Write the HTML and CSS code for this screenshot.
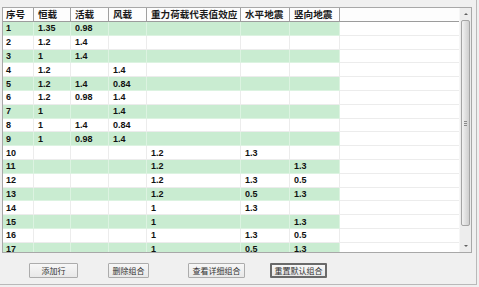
FILE: index.html
```html
<!DOCTYPE html>
<html lang="zh-CN">

<head>
    <meta charset="UTF-8">
    <title>荷载组合</title>
    <link rel="stylesheet" href="styles.css">
</head>

<body>
    <div class="window">
        <div class="grid">
            <div class="grid-body">
                <table class="combo-table">
                    <colgroup>
                        <col class="c-no">
                        <col class="c-dead">
                        <col class="c-live">
                        <col class="c-wind">
                        <col class="c-grav">
                        <col class="c-hor">
                        <col class="c-ver">
                        <col class="c-fill">
                    </colgroup>
                    <thead>
                        <tr>
                            <th>序号</th>
                            <th>恒载</th>
                            <th>活载</th>
                            <th>风载</th>
                            <th>重力荷载代表值效应</th>
                            <th>水平地震</th>
                            <th>竖向地震</th>
                            <th class="fill"></th>
                        </tr>
                    </thead>
                    <tbody>
                        <tr class="alt"><td>1</td><td>1.35</td><td>0.98</td><td></td><td></td><td></td><td></td><td class="fill"></td></tr>
                        <tr><td>2</td><td>1.2</td><td>1.4</td><td></td><td></td><td></td><td></td><td class="fill"></td></tr>
                        <tr class="alt"><td>3</td><td>1</td><td>1.4</td><td></td><td></td><td></td><td></td><td class="fill"></td></tr>
                        <tr><td>4</td><td>1.2</td><td></td><td>1.4</td><td></td><td></td><td></td><td class="fill"></td></tr>
                        <tr class="alt"><td>5</td><td>1.2</td><td>1.4</td><td>0.84</td><td></td><td></td><td></td><td class="fill"></td></tr>
                        <tr><td>6</td><td>1.2</td><td>0.98</td><td>1.4</td><td></td><td></td><td></td><td class="fill"></td></tr>
                        <tr class="alt"><td>7</td><td>1</td><td></td><td>1.4</td><td></td><td></td><td></td><td class="fill"></td></tr>
                        <tr><td>8</td><td>1</td><td>1.4</td><td>0.84</td><td></td><td></td><td></td><td class="fill"></td></tr>
                        <tr class="alt"><td>9</td><td>1</td><td>0.98</td><td>1.4</td><td></td><td></td><td></td><td class="fill"></td></tr>
                        <tr><td>10</td><td></td><td></td><td></td><td>1.2</td><td>1.3</td><td></td><td class="fill"></td></tr>
                        <tr class="alt"><td>11</td><td></td><td></td><td></td><td>1.2</td><td></td><td>1.3</td><td class="fill"></td></tr>
                        <tr><td>12</td><td></td><td></td><td></td><td>1.2</td><td>1.3</td><td>0.5</td><td class="fill"></td></tr>
                        <tr class="alt"><td>13</td><td></td><td></td><td></td><td>1.2</td><td>0.5</td><td>1.3</td><td class="fill"></td></tr>
                        <tr><td>14</td><td></td><td></td><td></td><td>1</td><td>1.3</td><td></td><td class="fill"></td></tr>
                        <tr class="alt"><td>15</td><td></td><td></td><td></td><td>1</td><td></td><td>1.3</td><td class="fill"></td></tr>
                        <tr><td>16</td><td></td><td></td><td></td><td>1</td><td>1.3</td><td>0.5</td><td class="fill"></td></tr>
                        <tr class="alt"><td>17</td><td></td><td></td><td></td><td>1</td><td>0.5</td><td>1.3</td><td class="fill"></td></tr>
                    </tbody>
                </table>
            </div>
            <div class="vscroll">
                <div class="arrow up"></div>
                <div class="thumb"><span class="grip"></span></div>
                <div class="arrow down"></div>
            </div>
        </div>
        <div class="actions">
            <button class="btn btn-add">添加行</button>
            <button class="btn btn-del">删除组合</button>
            <button class="btn btn-view">查看详细组合</button>
            <button class="btn btn-reset is-default">重置默认组合</button>
        </div>
    </div>
</body>

</html>
```

FILE: styles.css
```css
body {
    margin: 0;
    background-color: #f0f0f0;
    font-family: "Liberation Sans", Arial, sans-serif;
    color: #000;
}

.window {
    width: 476px;
    height: 284px;
    border-right: 1px solid #b9b9b9;
    border-bottom: 1px solid #b9b9b9;
    overflow: hidden;
}

.grid {
    display: flex;
    width: 468px;
    height: 244px;
    margin: 7px 0 0 2px;
    border: 1px solid #a8a8a8;
    background: #ffffff;
}

.grid-body {
    width: 457px;
    overflow: hidden;
}

.combo-table {
    table-layout: fixed;
    border-collapse: separate;
    border-spacing: 0;
    width: 457px;
}

.c-no { width: 31px; }
.c-dead { width: 37px; }
.c-live { width: 38px; }
.c-wind { width: 38px; }
.c-grav { width: 94px; }
.c-hor { width: 49px; }
.c-ver { width: 50px; }
.c-fill { width: 120px; }

.combo-table th,
.combo-table td {
    box-sizing: border-box;
    padding: 0 0 0 4px;
    text-align: left;
    white-space: nowrap;
    overflow: hidden;
}

.combo-table th {
    height: 14px;
    font-family: "Noto Sans CJK SC", sans-serif;
    font-size: 9.6px;
    font-weight: bold;
    line-height: 13px;
    color: #1a1a1a;
    background: #fdfdfd;
    border-right: 1px solid #a0a0a0;
    border-bottom: 1px solid #9c9c9c;
}

.combo-table th:first-child,
.combo-table td:first-child {
    padding-left: 3px;
}

.combo-table th.fill {
    border-right: none;
}

.combo-table td {
    height: 13.8px;
    font-size: 9px;
    font-weight: bold;
    line-height: 12px;
    color: #111;
    border-right: 1px solid #ececec;
    border-bottom: 1px solid #ececec;
}

.combo-table tr.alt td {
    background: #c9ecd1;
    border-color: #dcf3e1;
}

.combo-table tr.alt td.fill {
    background: #ffffff;
    border-color: #ececec;
}

.combo-table td.fill {
    border-right: none;
}

/* vertical scrollbar */
.vscroll {
    width: 11px;
    display: flex;
    flex-direction: column;
    align-items: center;
    background: #ededed;
    border-left: 1px solid #f6f6f6;
}

.arrow {
    height: 12px;
    width: 11px;
    display: flex;
    align-items: center;
    justify-content: center;
}

.arrow::before {
    content: "";
    border-left: 2px solid transparent;
    border-right: 2px solid transparent;
}

.arrow.up::before {
    border-bottom: 2px solid #606060;
}

.arrow.down::before {
    border-top: 2px solid #606060;
}

.thumb {
    flex: 1;
    width: 9px;
    margin: 0 0 14px;
    box-sizing: border-box;
    border: 1px solid #a4a4a4;
    border-radius: 2px;
    background: linear-gradient(to right, #f2f2f2, #dcdcdc 60%, #cfcfcf);
    display: flex;
    align-items: center;
    justify-content: center;
}

.grip {
    width: 3px;
    height: 5px;
    background: repeating-linear-gradient(to bottom, #8a8a8a 0 1px, transparent 1px 2px);
}

/* buttons */
.actions {
    display: flex;
    margin-top: 10px;
    padding-left: 29px;
}

.btn {
    box-sizing: border-box;
    height: 15px;
    padding: 0;
    font-family: "Noto Sans CJK SC", sans-serif;
    font-size: 8px;
    line-height: 12px;
    color: #333;
    background: linear-gradient(to bottom, #f7f7f7, #e8e8e8);
    border: 1px solid #acacac;
    border-radius: 1px;
}

.btn-add { width: 49px; }
.btn-del { width: 41px; margin-left: 30px; }
.btn-view { width: 57px; margin-left: 39px; }
.btn-reset { width: 57px; margin-left: 25px; }

.btn.is-default {
    border: 2px solid #6a6a6a;
}
```
